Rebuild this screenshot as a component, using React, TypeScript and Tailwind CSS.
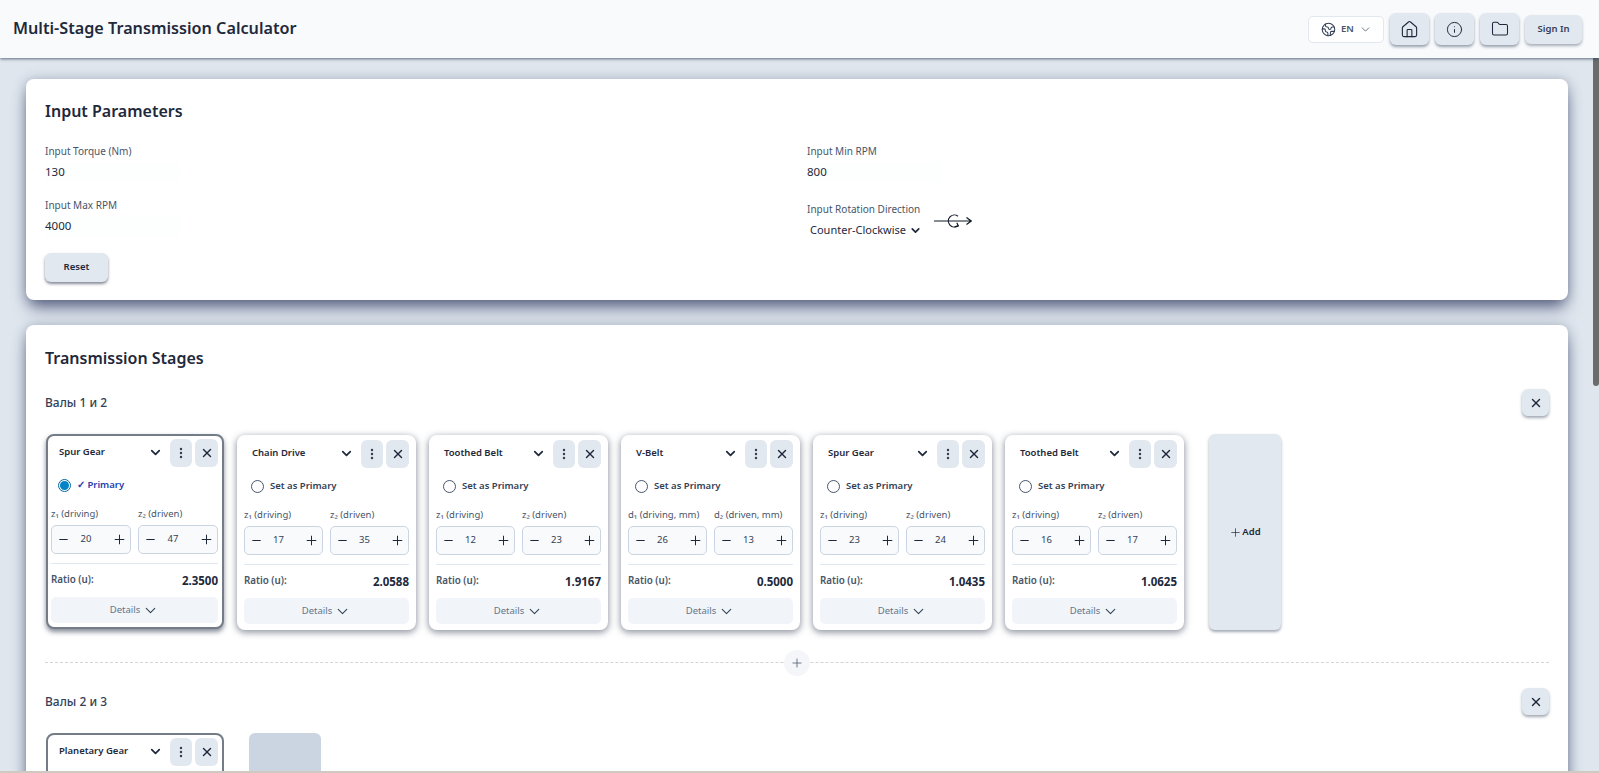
import { ChevronDown, EllipsisVertical, Earth, Folder, House, Info, Minus, Plus, X } from 'lucide-react'

const STAGES = [
  { name: 'Spur Gear', a: 'z₁ (driving)', b: 'z₂ (driven)', v1: 20, v2: 47, ratio: '2.3500', primary: true },
  { name: 'Chain Drive', a: 'z₁ (driving)', b: 'z₂ (driven)', v1: 17, v2: 35, ratio: '2.0588' },
  { name: 'Toothed Belt', a: 'z₁ (driving)', b: 'z₂ (driven)', v1: 12, v2: 23, ratio: '1.9167' },
  { name: 'V-Belt', a: 'd₁ (driving, mm)', b: 'd₂ (driven, mm)', v1: 26, v2: 13, ratio: '0.5000' },
  { name: 'Spur Gear', a: 'z₁ (driving)', b: 'z₂ (driven)', v1: 23, v2: 24, ratio: '1.0435' },
  { name: 'Toothed Belt', a: 'z₁ (driving)', b: 'z₂ (driven)', v1: 16, v2: 17, ratio: '1.0625' },
]

function Stepper({ label, value }: { label: string; value: number }) {
  return (
    <div className="min-w-0 flex-1">
      <p className="mb-[3px] h-[17px] whitespace-nowrap text-[9.5px] leading-[17px] text-[#475569]">{label}</p>
      <div className="flex h-[29px] items-center justify-between rounded-[5px] border border-[#cbd5e1] bg-[#f8fafc] pl-[5px] pr-[3px] text-[#1e293b]">
        <Minus size={13} strokeWidth={2} />
        <span className="mr-[10px] text-[9.5px] text-[#334155]">{value}</span>
        <Plus size={15} strokeWidth={1.6} />
      </div>
    </div>
  )
}

function CardHead({ name }: { name: string }) {
  return (
    <div className="flex h-[31px] items-center pt-[2px]">
      <span className="ml-2 flex-1 text-[9.5px] font-semibold text-[#1e293b]">{name}</span>
      <ChevronDown size={15} strokeWidth={2.8} className="mr-[7px] text-[#1e293b]" />
      <span className="mr-[3px] flex h-[28px] w-[22px] items-center justify-center rounded-md bg-[#e2e8f0]">
        <EllipsisVertical size={14} strokeWidth={2.2} className="text-[#334155]" />
      </span>
      <span className="flex h-[28px] w-[23px] items-center justify-center rounded-md bg-[#e2e8f0]">
        <X size={14} strokeWidth={2.4} className="text-[#1e293b]" />
      </span>
    </div>
  )
}

function StageCard({ stage }: { stage: (typeof STAGES)[number] }) {
  return (
    <div
      className={
        stage.primary
          ? 'h-[195px] w-[178px] shrink-0 rounded-lg border-2 border-[#747c88] bg-white pl-[3px] pr-[4px] shadow-[0_3px_5px_rgba(51,65,85,0.6)]'
          : 'mt-[1px] h-[195px] w-[179px] shrink-0 rounded-lg border-2 border-white bg-white px-[5px] shadow-[0_2px_6px_1px_rgba(51,65,85,0.5)]'
      }
    >
      <CardHead name={stage.name} />
      <div className="flex h-[36px] items-center pl-[7px]">
        {stage.primary ? (
          <>
            <span className="mr-[6px] flex h-[13px] w-[13px] items-center justify-center rounded-full border border-[#0369a1]">
              <span className="h-[9px] w-[9px] rounded-full bg-[#0284c7]" />
            </span>
            <span className="text-[9.5px] font-semibold text-[#1e40af]">✓ Primary</span>
          </>
        ) : (
          <>
            <span className="mr-[6px] h-[13px] w-[13px] rounded-full border border-[#475569]" />
            <span className="text-[9.5px] font-semibold text-[#334155]">Set as Primary</span>
          </>
        )}
      </div>
      <div className="mt-[2px] flex gap-[7px]">
        <Stepper label={stage.a} value={stage.v1} />
        <Stepper label={stage.b} value={stage.v2} />
      </div>
      <div className="mt-[9px] flex h-[34px] items-center justify-between border-t border-[#e2e8f0] text-[9.8px]">
        <span className="font-semibold text-[#475569]">Ratio (u):</span>
        <span className="text-[11.5px] font-bold text-[#1e293b]">{stage.ratio}</span>
      </div>
      <div className="flex h-[26px] items-center justify-center gap-[2px] rounded-[5px] bg-[#f1f5f9] text-[9.5px] text-[#64748b]">
        Details
        <ChevronDown size={17} strokeWidth={1.5} className="text-[#334155]" />
      </div>
    </div>
  )
}

function RotationIcon() {
  return (
    <svg width="38" height="16" viewBox="0 0 38 16" fill="none" stroke="#111827" strokeWidth="1.2">
      <path d="M0 8H37M32.5 4.5L37.2 8L32.5 11.5" />
      <path d="M24 3.2A6 6 0 1 0 24 12.8" />
      <path d="M20.5 13.8L24.3 12.8L22.8 9.8" />
    </svg>
  )
}

function SquareClose() {
  return (
    <span className="flex h-[27px] w-[27px] items-center justify-center rounded-md bg-[#e2e8f0] shadow-[0_2px_3px_rgba(71,85,105,0.5)]">
      <X size={14} strokeWidth={2.4} className="text-[#1e293b]" />
    </span>
  )
}

function HeaderButton({ children }: { children: React.ReactNode }) {
  return (
    <span className="flex h-[32px] w-[39px] items-center justify-center rounded-md bg-[#e2e8f0] text-[#1e293b] shadow-[0_2px_3px_rgba(71,85,105,0.55)]">
      {children}
    </span>
  )
}

function Field({ label, value, className }: { label: string; value: string; className: string }) {
  return (
    <div className={className}>
      <p className="text-[10px] leading-[14px] text-[#475569]">{label}</p>
      <div className="mt-[4px] flex h-[20px] w-[135px] items-center bg-[#fdfefe] text-[11.5px] text-[#1e293b]">{value}</div>
    </div>
  )
}

const SECTION_SHADOW = 'shadow-[0_10px_16px_-3px_rgba(40,48,90,0.7),0_0_12px_rgba(100,116,139,0.4)]'

export default function App() {
  return (
    <div className="flex h-[773px] flex-col overflow-hidden bg-[#dfe6ee] font-['Noto_Sans',sans-serif]">
      <header className="relative z-10 flex h-[58px] shrink-0 items-center bg-[#f8fafc] pl-[13px] pr-[17px] shadow-[0_1px_3px_rgba(51,65,85,0.75)]">
        <h1 className="mb-[2px] flex-1 text-[16.2px] font-semibold text-[#1e293b]">Multi-Stage Transmission Calculator</h1>
        <div className="flex items-center gap-[6px]">
          <span className="flex h-[27px] w-[76px] items-center gap-[5px] rounded-[5px] border border-[#e2e8f0] bg-white pl-[12px] text-[#475569]">
            <Earth size={15} strokeWidth={1.7} className="text-[#334155]" />
            <span className="text-[9.5px] font-semibold">EN</span>
            <ChevronDown size={13} strokeWidth={1.5} />
          </span>
          <HeaderButton>
            <House size={19} strokeWidth={1.4} />
          </HeaderButton>
          <HeaderButton>
            <Info size={17} strokeWidth={1.4} />
          </HeaderButton>
          <HeaderButton>
            <Folder size={18} strokeWidth={1.4} />
          </HeaderButton>
          <span className="flex h-[29px] w-[57px] items-center justify-center rounded-md bg-[#e2e8f0] text-[9.5px] font-semibold text-[#334155] shadow-[0_2px_3px_rgba(71,85,105,0.45)]">
            Sign In
          </span>
        </div>
      </header>

      <div className="flex min-h-0 flex-1">
        <main className="min-w-0 flex-1 pl-[26px] pr-[25px] pt-[21px]">
          <section className={`h-[221px] rounded-lg bg-white px-[19px] pt-[20px] ${SECTION_SHADOW}`}>
            <h2 className="text-[16px] font-semibold leading-[24px] text-[#1e293b]">Input Parameters</h2>
            <div className="mt-[21px] grid grid-cols-2 gap-x-5">
              <div>
                <Field label="Input Torque (Nm)" value="130" className="" />
                <Field label="Input Max RPM" value="4000" className="mt-[16px]" />
                <span className="mt-[17px] flex h-[29px] w-[63px] items-center justify-center rounded-md bg-[#e2e8f0] text-[9.5px] font-semibold text-[#1e293b] shadow-[0_2px_3px_rgba(51,65,85,0.6)]">
                  Reset
                </span>
              </div>
              <div>
                <Field label="Input Min RPM" value="800" className="" />
                <div className="mt-[20px] flex items-start">
                  <div>
                    <p className="text-[10px] leading-[14px] text-[#475569]">Input Rotation Direction</p>
                    <div className="mt-[4px] flex h-[20px] items-center gap-[3px] pl-[3px] text-[11px] text-[#1e293b]">
                      Counter-Clockwise
                      <ChevronDown size={13} strokeWidth={3.2} />
                    </div>
                  </div>
                  <span className="ml-[12px] mt-[11px]">
                    <RotationIcon />
                  </span>
                </div>
              </div>
            </div>
          </section>

          <section className={`relative mt-[25px] rounded-lg bg-white px-[19px] pt-[21px] ${SECTION_SHADOW}`}>
            <h2 className="text-[16px] font-semibold leading-[24px] text-[#1e293b]">Transmission Stages</h2>
            <div className="mt-[19px] flex h-[27px] items-center justify-between">
              <h3 className="text-[12px] font-medium text-[#334155]">Валы 1 и 2</h3>
              <SquareClose />
            </div>
            <div className="mt-[18px] flex items-start gap-[13px] pl-[1px]">
              {STAGES.map((stage, i) => (
                <StageCard key={i} stage={stage} />
              ))}
              <div className="ml-[12px] flex h-[196px] w-[72px] shrink-0 items-center justify-center rounded-md bg-[#e2e8f0] text-[9.5px] font-semibold text-[#1e293b] shadow-[0_2px_3px_rgba(71,85,105,0.5)]">
                <Plus size={13} strokeWidth={1.3} />
                Add
              </div>
            </div>
            <div className="relative mt-[32px] border-t border-dashed border-[#d4d4d8]">
              <span className="absolute left-[739px] top-[-13px] flex h-[26px] w-[26px] items-center justify-center rounded-full bg-[#f4f6f9] text-[#475569]">
                <Plus size={14} strokeWidth={1.3} />
              </span>
            </div>
            <div className="mt-[25px] flex h-[27px] items-center justify-between">
              <h3 className="text-[12px] font-medium text-[#334155]">Валы 2 и 3</h3>
              <SquareClose />
            </div>
            <div className="mt-[18px] flex gap-[25px] pl-[1px]">
              <div className="h-[196px] w-[178px] shrink-0 rounded-lg border-2 border-[#747c88] bg-white pl-[3px] pr-[4px]">
                <CardHead name="Planetary Gear" />
              </div>
              <div className="h-[196px] w-[72px] shrink-0 rounded-md bg-[#cbd5e1]" />
            </div>
          </section>
        </main>
        <div className="w-[6px] shrink-0">
          <div className="h-[328px] rounded-b bg-[#6b6b6b]" />
        </div>
      </div>
      <div className="relative z-10 h-[2px] shrink-0 bg-[#cfc9c2]" />
    </div>
  )
}
